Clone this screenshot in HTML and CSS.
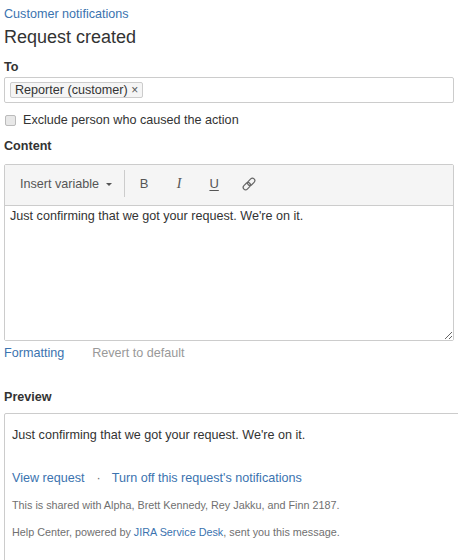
FILE: index.html
```html
<!DOCTYPE html>
<html lang="en">
<head>
<meta charset="utf-8">
<title>Request created</title>
<link rel="stylesheet" href="styles.css">
</head>
<body>
  <a class="crumb" href="#">Customer notifications</a>
  <h1 class="title">Request created</h1>

  <div class="field-label">To</div>
  <div class="recipients">
    <span class="tag">Reporter (customer) <span class="tag-x">×</span></span>
  </div>

  <label class="check-row">
    <span class="check"></span>
    <span>Exclude person who caused the action</span>
  </label>

  <div class="field-label content-label">Content</div>
  <div class="editor">
    <div class="toolbar">
      <span class="tb-insert">Insert variable <span class="caret"></span></span>
      <span class="tb-divider"></span>
      <span class="tb-btn tb-bold">B</span>
      <span class="tb-btn tb-italic">I</span>
      <span class="tb-btn tb-under">U</span>
      <span class="tb-btn">
        <svg width="16" height="16" viewBox="0 0 16 16" aria-hidden="true">
          <g transform="rotate(-45 8 8)" fill="none" stroke="#666" stroke-width="1.2">
            <rect x="0.8" y="5.6" width="8.2" height="4.8" rx="2.4"/>
            <rect x="7" y="5.6" width="8.2" height="4.8" rx="2.4"/>
          </g>
        </svg>
      </span>
    </div>
    <textarea class="body-text" rows="8">Just confirming that we got your request. We're on it.</textarea>
  </div>
  <div class="editor-links">
    <a class="link" href="#">Formatting</a>
    <span class="muted">Revert to default</span>
  </div>

  <div class="field-label preview-label">Preview</div>
  <div class="preview">
    <p class="preview-text">Just confirming that we got your request. We're on it.</p>
    <p class="preview-actions">
      <a class="link" href="#">View request</a><span class="sep">·</span><a class="link" href="#">Turn off this request's notifications</a>
    </p>
    <p class="small">This is shared with Alpha, Brett Kennedy, Rey Jakku, and Finn 2187.</p>
    <p class="small help">Help Center, powered by <a class="link" href="#">JIRA Service Desk</a>, sent you this message.</p>
  </div>
</body>
</html>
```
FILE: styles.css
```css
html {
  overflow: hidden;
}

body {
  margin: 0;
  padding: 5px 4px 0 4px;
  font-family: "Liberation Sans", Arial, sans-serif;
  font-size: 12.6px;
  line-height: 16px;
  color: #333;
  background: #fff;
}

a {
  text-decoration: none;
}

.link,
.crumb {
  color: #3b73af;
}

.crumb {
  display: block;
  line-height: 18px;
}

.title {
  margin: 2px 0 0;
  font-size: 18px;
  font-weight: normal;
  line-height: 24px;
  color: #333;
}

.field-label {
  margin-top: 10px;
  font-weight: bold;
  line-height: 16px;
}

.recipients {
  margin-top: 2px;
  border: 1px solid #ccc;
  border-radius: 2px;
  padding: 4px 5px;
  box-sizing: border-box;
  height: 26px;
  display: flex;
  align-items: flex-start;
}

.tag {
  display: inline-block;
  height: 16px;
  box-sizing: border-box;
  border: 1px solid #ccc;
  border-radius: 2px;
  background: #f5f5f5;
  padding: 0 4px;
  line-height: 14px;
  color: #333;
}

.tag-x {
  font-size: 12px;
  color: #555;
}

.check-row {
  margin-top: 9px;
  display: flex;
  align-items: center;
  line-height: 16px;
}

.check {
  width: 9px;
  height: 9px;
  margin-left: 1px;
  margin-right: 7px;
  border: 1px solid #bbb;
  border-radius: 2px;
  background: #e8e8e8;
}

.content-label {
  margin-top: 10px;
}

.editor {
  margin-top: 10px;
  border: 1px solid #ccc;
  border-radius: 2px;
}

.toolbar {
  height: 41px;
  box-sizing: border-box;
  padding-bottom: 3px;
  border-bottom: 1px solid #ccc;
  background: #f5f5f5;
  display: flex;
  align-items: center;
  color: #555;
}

.tb-insert {
  padding-left: 15px;
  display: flex;
  align-items: center;
  white-space: pre;
}

.caret {
  width: 0;
  height: 0;
  margin-left: 3px;
  margin-top: 2px;
  border-left: 3.5px solid transparent;
  border-right: 3.5px solid transparent;
  border-top: 3.5px solid #555;
}

.tb-divider {
  width: 1px;
  height: 27px;
  margin-left: 12px;
  background: #ccc;
}

.tb-btn {
  width: 35px;
  display: flex;
  justify-content: center;
  align-items: center;
  font-size: 13px;
  color: #555;
}

.tb-divider + .tb-btn {
  margin-left: 2px;
}

.tb-italic {
  font-family: "Liberation Serif", "Times New Roman", serif;
  font-style: italic;
  font-size: 14px;
}

.tb-under {
  text-decoration: underline;
  text-underline-offset: 2px;
}

.body-text {
  display: block;
  width: 100%;
  height: 134px;
  box-sizing: border-box;
  margin: 0;
  border: 0;
  padding: 3px 5px 2px;
  font-family: "Liberation Sans", Arial, sans-serif;
  font-size: 12.6px;
  line-height: 15px;
  color: #333;
  resize: vertical;
  outline: none;
  background: #fff;
}

.editor-links {
  margin-top: 4px;
  display: flex;
  gap: 28px;
  line-height: 16px;
}

.muted {
  color: #999;
}

.preview-label {
  margin-top: 28px;
}

.preview {
  margin-top: 8px;
  width: calc(100% + 20px);
  border: 1px solid #ccc;
  border-radius: 2px;
  padding: 13px 7px 40px;
}

.preview p {
  margin: 0;
}

.preview-text {
  line-height: 16px;
}

.preview-actions {
  margin-top: 27px !important;
  line-height: 16px;
}

.sep {
  color: #707070;
  margin: 0 11px 0 12px;
}

.small {
  margin-top: 12px !important;
  font-size: 10.8px;
  line-height: 14px;
  color: #707070;
}

.small.help {
  margin-top: 13px !important;
}
```
